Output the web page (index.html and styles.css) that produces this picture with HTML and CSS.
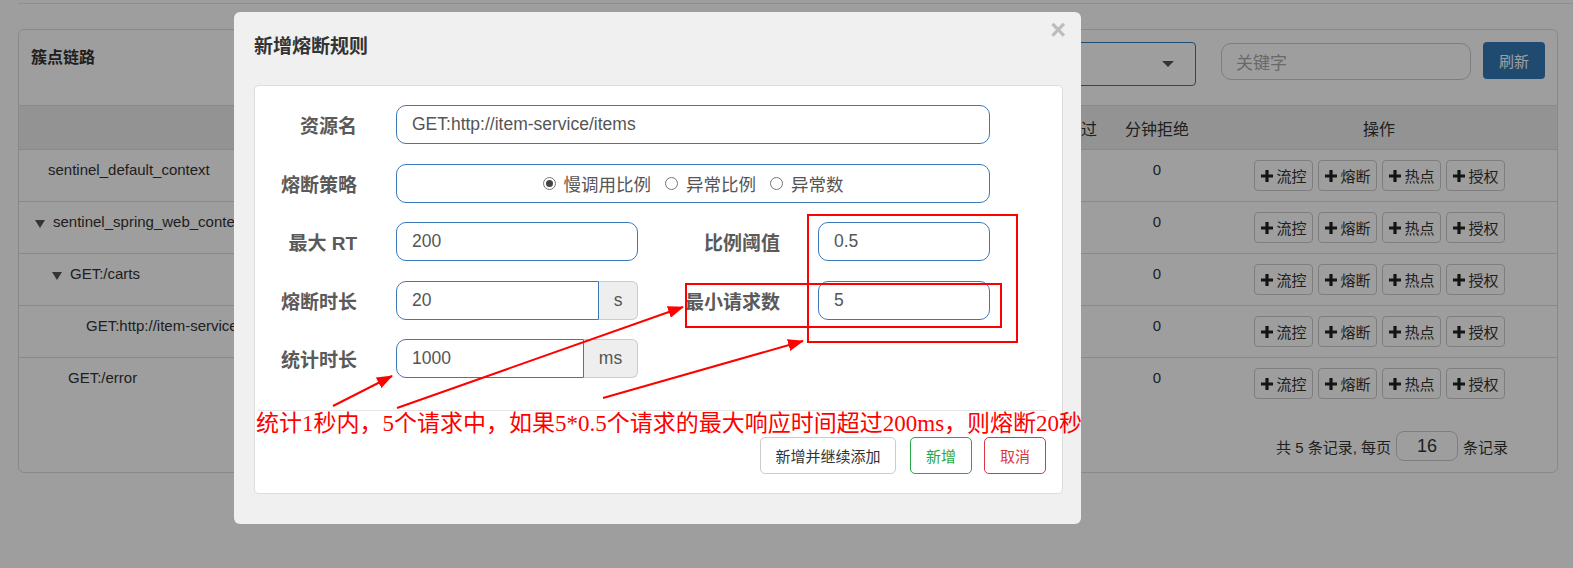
FILE: index.html
```html
<!DOCTYPE html>
<html lang="zh-CN">
<head>
<meta charset="utf-8">
<title>新增熔断规则</title>
<link rel="stylesheet" href="styles.css">
</head>
<body>
<div class="page">
  <div class="topbar"></div>
  <div class="panel">
    <div class="panel-head">
      <h3 class="panel-title">簇点链路</h3>
      <div class="tools">
        <div class="select"><span class="caret"></span></div>
        <div class="search">关键字</div>
        <button class="btn-refresh">刷新</button>
      </div>
    </div>
    <div class="table">
      <div class="tr th">
        <div class="td">资源名</div><div class="td">通过QPS</div><div class="td">拒绝QPS</div><div class="td">分钟通过</div><div class="td">分钟拒绝</div><div class="td">操作</div>
      </div>
      <div class="tr">
        <div class="td name lv1">sentinel_default_context</div><div class="td">0</div><div class="td">0</div><div class="td">0</div><div class="td">0</div>
        <div class="td ops"><button class="op"><svg viewBox="0 0 12 12"><path d="M4.4 0h3.2v4.4H12v3.2H7.6V12H4.4V7.6H0V4.4h4.4z"/></svg>流控</button><button class="op"><svg viewBox="0 0 12 12"><path d="M4.4 0h3.2v4.4H12v3.2H7.6V12H4.4V7.6H0V4.4h4.4z"/></svg>熔断</button><button class="op"><svg viewBox="0 0 12 12"><path d="M4.4 0h3.2v4.4H12v3.2H7.6V12H4.4V7.6H0V4.4h4.4z"/></svg>热点</button><button class="op"><svg viewBox="0 0 12 12"><path d="M4.4 0h3.2v4.4H12v3.2H7.6V12H4.4V7.6H0V4.4h4.4z"/></svg>授权</button></div>
      </div>
      <div class="tr">
        <div class="td name lv2"><span class="tri"></span>sentinel_spring_web_context</div><div class="td">0</div><div class="td">0</div><div class="td">0</div><div class="td">0</div>
        <div class="td ops"><button class="op"><svg viewBox="0 0 12 12"><path d="M4.4 0h3.2v4.4H12v3.2H7.6V12H4.4V7.6H0V4.4h4.4z"/></svg>流控</button><button class="op"><svg viewBox="0 0 12 12"><path d="M4.4 0h3.2v4.4H12v3.2H7.6V12H4.4V7.6H0V4.4h4.4z"/></svg>熔断</button><button class="op"><svg viewBox="0 0 12 12"><path d="M4.4 0h3.2v4.4H12v3.2H7.6V12H4.4V7.6H0V4.4h4.4z"/></svg>热点</button><button class="op"><svg viewBox="0 0 12 12"><path d="M4.4 0h3.2v4.4H12v3.2H7.6V12H4.4V7.6H0V4.4h4.4z"/></svg>授权</button></div>
      </div>
      <div class="tr">
        <div class="td name lv3"><span class="tri"></span>GET:/carts</div><div class="td">0</div><div class="td">0</div><div class="td">0</div><div class="td">0</div>
        <div class="td ops"><button class="op"><svg viewBox="0 0 12 12"><path d="M4.4 0h3.2v4.4H12v3.2H7.6V12H4.4V7.6H0V4.4h4.4z"/></svg>流控</button><button class="op"><svg viewBox="0 0 12 12"><path d="M4.4 0h3.2v4.4H12v3.2H7.6V12H4.4V7.6H0V4.4h4.4z"/></svg>熔断</button><button class="op"><svg viewBox="0 0 12 12"><path d="M4.4 0h3.2v4.4H12v3.2H7.6V12H4.4V7.6H0V4.4h4.4z"/></svg>热点</button><button class="op"><svg viewBox="0 0 12 12"><path d="M4.4 0h3.2v4.4H12v3.2H7.6V12H4.4V7.6H0V4.4h4.4z"/></svg>授权</button></div>
      </div>
      <div class="tr">
        <div class="td name lv4">GET:http://item-service/items</div><div class="td">0</div><div class="td">0</div><div class="td">0</div><div class="td">0</div>
        <div class="td ops"><button class="op"><svg viewBox="0 0 12 12"><path d="M4.4 0h3.2v4.4H12v3.2H7.6V12H4.4V7.6H0V4.4h4.4z"/></svg>流控</button><button class="op"><svg viewBox="0 0 12 12"><path d="M4.4 0h3.2v4.4H12v3.2H7.6V12H4.4V7.6H0V4.4h4.4z"/></svg>熔断</button><button class="op"><svg viewBox="0 0 12 12"><path d="M4.4 0h3.2v4.4H12v3.2H7.6V12H4.4V7.6H0V4.4h4.4z"/></svg>热点</button><button class="op"><svg viewBox="0 0 12 12"><path d="M4.4 0h3.2v4.4H12v3.2H7.6V12H4.4V7.6H0V4.4h4.4z"/></svg>授权</button></div>
      </div>
      <div class="tr last">
        <div class="td name lv5">GET:/error</div><div class="td">0</div><div class="td">0</div><div class="td">0</div><div class="td">0</div>
        <div class="td ops"><button class="op"><svg viewBox="0 0 12 12"><path d="M4.4 0h3.2v4.4H12v3.2H7.6V12H4.4V7.6H0V4.4h4.4z"/></svg>流控</button><button class="op"><svg viewBox="0 0 12 12"><path d="M4.4 0h3.2v4.4H12v3.2H7.6V12H4.4V7.6H0V4.4h4.4z"/></svg>熔断</button><button class="op"><svg viewBox="0 0 12 12"><path d="M4.4 0h3.2v4.4H12v3.2H7.6V12H4.4V7.6H0V4.4h4.4z"/></svg>热点</button><button class="op"><svg viewBox="0 0 12 12"><path d="M4.4 0h3.2v4.4H12v3.2H7.6V12H4.4V7.6H0V4.4h4.4z"/></svg>授权</button></div>
      </div>
    </div>
    <div class="pager">共 5 条记录, 每页<span class="pagesize">16</span>条记录</div>
  </div>
</div>

<div class="backdrop"></div>

<div class="modal">
  <div class="modal-head">
    <h4 class="modal-title">新增熔断规则</h4>
    <span class="close">×</span>
  </div>
  <div class="card">
    <div class="row">
      <label class="lbl">资源名</label>
      <div class="field w-full">GET:http://item-service/items</div>
    </div>
    <div class="row">
      <label class="lbl">熔断策略</label>
      <div class="field w-full radios">
        <span class="radio checked"></span><span class="rtext">慢调用比例</span>
        <span class="radio"></span><span class="rtext">异常比例</span>
        <span class="radio"></span><span class="rtext">异常数</span>
      </div>
    </div>
    <div class="row">
      <label class="lbl">最大 RT</label>
      <div class="field w-half">200</div>
      <label class="lbl lbl2">比例阈值</label>
      <div class="field w-small">0.5</div>
    </div>
    <div class="row">
      <label class="lbl">熔断时长</label>
      <div class="group w-half"><div class="field grow">20</div><span class="addon">s</span></div>
      <label class="lbl lbl2">最小请求数</label>
      <div class="field w-small">5</div>
    </div>
    <div class="row">
      <label class="lbl">统计时长</label>
      <div class="group w-half"><div class="field grow">1000</div><span class="addon addon-ms">ms</span></div>
    </div>
    <div class="footer">
      <button class="btn">新增并继续添加</button>
      <button class="btn btn-ok">新增</button>
      <button class="btn btn-cancel">取消</button>
    </div>
  </div>
</div>

<svg class="marks" viewBox="0 0 1573 568" width="1573" height="568">
  <defs>
    <marker id="ah" markerWidth="16" markerHeight="12" refX="15" refY="6" orient="auto" markerUnits="userSpaceOnUse">
      <path d="M0,0 L16,6 L0,12 z" fill="#ff0000"/>
    </marker>
  </defs>
  <rect x="808" y="215" width="209" height="127" fill="none" stroke="#ff0000" stroke-width="2"/>
  <rect x="686" y="284" width="315" height="43" fill="none" stroke="#ff0000" stroke-width="2"/>
  <line x1="333" y1="406" x2="392" y2="376" stroke="#ff0000" stroke-width="2" marker-end="url(#ah)"/>
  <line x1="397" y1="408" x2="683" y2="307" stroke="#ff0000" stroke-width="2" marker-end="url(#ah)"/>
  <line x1="603" y1="398" x2="803" y2="341" stroke="#ff0000" stroke-width="2" marker-end="url(#ah)"/>
</svg>
<div class="note">统计1秒内，5个请求中，如果5*0.5个请求的最大响应时间超过200ms，则熔断20秒</div>
</body>
</html>
```

FILE: styles.css
```css
* { box-sizing: border-box; }
html { overflow: hidden; }
html, body { margin: 0; padding: 0; }
body {
  width: 1573px;
  height: 568px;
  overflow: hidden;
  position: relative;
  background: #fff;
  color: #333;
  font-family: "Liberation Sans", "Noto Sans CJK SC", sans-serif;
}

/* ---------- background page ---------- */
.topbar { height: 4px; margin-left: 18px; border-bottom: 1px solid #e5e5e5; }
.panel {
  margin: 25px 0 0 18px;
  width: 1540px;
  border: 1px solid #ddd;
  border-radius: 6px;
  background: #fff;
}
.panel-head {
  height: 76px;
  display: flex;
  border-bottom: 1px solid #ddd;
}
.panel-title {
  margin: 0;
  padding: 16px 0 0 12px;
  font-size: 16px;
  line-height: 20px;
  font-weight: bold;
  font-family: "Noto Sans CJK SC", sans-serif;
  color: #333;
}
.tools {
  margin-left: auto;
  display: flex;
  align-items: flex-start;
  padding: 12px 12px 0 0;
}
.select {
  width: 300px;
  height: 44px;
  border: 1px solid #337ab7;
  border-radius: 4px;
  display: flex;
  align-items: center;
  justify-content: flex-end;
  padding-right: 21px;
  margin-right: 25px;
}
.caret {
  width: 0; height: 0;
  border-left: 6px solid transparent;
  border-right: 6px solid transparent;
  border-top: 6px solid #555;
}
.search {
  width: 250px;
  height: 37px;
  margin-top: 1px;
  margin-right: 12px;
  border: 1px solid #ccc;
  border-radius: 10px;
  padding-left: 14px;
  font-size: 17px;
  line-height: 35px;
  color: #aaa;
  font-family: "Noto Sans CJK SC", sans-serif;
}
.btn-refresh {
  width: 62px;
  height: 37px;
  border: none;
  border-radius: 4px;
  background: #337ab7;
  color: #fff;
  font-size: 15px;
  font-family: "Noto Sans CJK SC", sans-serif;
  padding: 0;
}

.tr {
  display: grid;
  grid-template-columns: 822px 88px 88px 96px 88px 356px;
  height: 52px;
  border-bottom: 1px solid #ddd;
}
.tr.last { border-bottom: none; }
.td {
  padding-top: 10px;
  text-align: center;
  font-size: 15px;
  line-height: 20px;
  white-space: nowrap;
  overflow: hidden;
}
.th {
  height: 44px;
  background: #eee;
  align-items: center;
}
.th .td {
  padding-top: 0;
  font-size: 16px;
  font-family: "Noto Sans CJK SC", sans-serif;
}
.td.name { text-align: left; display: flex; align-items: flex-start; }
.lv1 { padding-left: 29px; }
.lv2 { padding-left: 16px; }
.lv3 { padding-left: 33px; }
.lv4 { padding-left: 67px; }
.lv5 { padding-left: 49px; }
.tri {
  display: inline-block;
  width: 0; height: 0;
  margin: 8px 8px 0 0;
  border-left: 5px solid transparent;
  border-right: 5px solid transparent;
  border-top: 8px solid #555;
}
.ops {
  padding-top: 10px;
  display: flex;
  justify-content: center;
  gap: 5px;
}
.op {
  height: 31px;
  width: 59px;
  padding: 0 0 0 6px;
  display: flex;
  align-items: center;
  gap: 4px;
  border: 1px solid #ccc;
  border-radius: 4px;
  background: #fff;
  color: #333;
  font-size: 15px;
  font-family: "Noto Sans CJK SC", sans-serif;
}
.op svg { width: 12px; height: 12px; fill: #222; flex: none; }

.pager {
  display: flex;
  justify-content: flex-end;
  align-items: center;
  padding: 21px 49px 11px 0;
  font-size: 15px;
  color: #333;
}
.pagesize {
  width: 62px;
  height: 30px;
  margin: 0 5px;
  border: 1px solid #ccc;
  border-radius: 8px;
  text-align: center;
  font-size: 18px;
  line-height: 28px;
}

.backdrop {
  position: absolute;
  inset: 0;
  background: rgba(0, 0, 0, 0.38);
}

/* ---------- modal ---------- */
.modal {
  position: absolute;
  left: 234px;
  top: 12px;
  width: 847px;
  padding: 0 18px 30px 20px;
  background: #f0f0f0;
  border-radius: 6px;
}
.modal-head { height: 73px; padding-top: 20px; }
.modal-title {
  margin: 0;
  font-size: 19px;
  line-height: 26px;
  font-weight: bold;
  color: #333;
  font-family: "Noto Sans CJK SC", sans-serif;
}
.close {
  position: absolute;
  right: 15px;
  top: 5px;
  font-size: 27px;
  line-height: 1;
  font-weight: bold;
  color: #bcbcbc;
}
.card {
  background: #fff;
  border: 1px solid #ddd;
  border-radius: 5px;
  padding-top: 19px;
}
.row {
  display: flex;
  align-items: center;
  height: 39px;
  margin-bottom: 19.5px;
}
.lbl {
  width: 102px;
  margin-right: 39px;
  text-align: right;
  font-size: 19px;
  font-weight: bold;
  color: #5a5a5a;
  font-family: "Liberation Sans", "Noto Sans CJK SC", sans-serif;
  white-space: nowrap;
}
.lbl2 { width: 142px; margin-right: 38px; }
.field {
  height: 39px;
  border: 1px solid #3a78b8;
  border-radius: 10px;
  padding-left: 15px;
  font-size: 17.5px;
  line-height: 37px;
  color: #555;
  background: #fff;
  white-space: nowrap;
}
.w-full { width: 594px; }
.w-half { width: 242px; }
.w-small { width: 172px; }
.group { display: flex; height: 39px; }
.group .grow { flex: 1; border-radius: 10px 0 0 10px; }
.addon {
  width: 39px;
  height: 39px;
  border: 1px solid #ccc;
  border-left: none;
  border-radius: 0 6px 6px 0;
  background: #eee;
  color: #555;
  font-size: 17.5px;
  line-height: 37px;
  text-align: center;
}
.addon-ms { width: 54px; }
.radios {
  display: flex;
  align-items: center;
  justify-content: center;
  padding-left: 0;
  font-family: "Noto Sans CJK SC", sans-serif;
}
.radio {
  width: 13px;
  height: 13px;
  border: 1px solid #767676;
  border-radius: 50%;
  margin-right: 8px;
  position: relative;
  flex: none;
}
.radio.checked::after {
  content: "";
  position: absolute;
  left: 2px; top: 2px;
  width: 7px; height: 7px;
  border-radius: 50%;
  background: #444;
}
.rtext { margin-right: 14px; line-height: 37px; }
.rtext:last-child { margin-right: 0; }

.footer {
  margin: 32px 16px 0 3px;
  border-top: 1px solid #e5e5e5;
  padding: 26px 0 19px;
  display: flex;
  justify-content: flex-end;
}
.btn {
  height: 37px;
  padding: 0;
  margin-left: 13px;
  border: 1px solid #ccc;
  border-radius: 5px;
  background: #fff;
  color: #333;
  font-size: 15px;
  white-space: nowrap;
  font-family: "Noto Sans CJK SC", sans-serif;
}
.btn:first-child { width: 136px; margin-left: 0; }
.btn-ok { width: 62px; border-color: #28a745; color: #28a745; margin-left: 14px; }
.btn-cancel { width: 62px; border-color: #dc3545; color: #dc3545; margin-left: 12px; }

/* ---------- annotation overlay ---------- */
.marks { position: absolute; left: 0; top: 0; pointer-events: none; }
.note {
  position: absolute;
  left: 256px;
  top: 410px;
  font-size: 23px;
  line-height: 28px;
  color: #ff0000;
  white-space: nowrap;
  font-family: "Liberation Serif", "Noto Sans CJK SC", serif;
}
```
